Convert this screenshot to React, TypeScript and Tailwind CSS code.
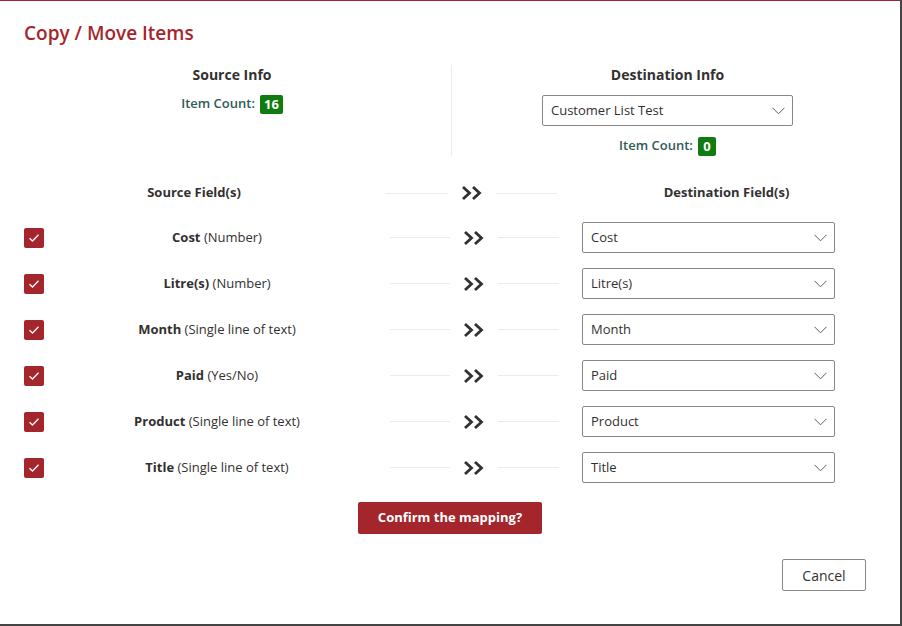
import React from 'react';

const fields = [
  { name: 'Cost', type: 'Number', dest: 'Cost' },
  { name: 'Litre(s)', type: 'Number', dest: 'Litre(s)' },
  { name: 'Month', type: 'Single line of text', dest: 'Month' },
  { name: 'Paid', type: 'Yes/No', dest: 'Paid' },
  { name: 'Product', type: 'Single line of text', dest: 'Product' },
  { name: 'Title', type: 'Single line of text', dest: 'Title' },
];

const DoubleChevron: React.FC = () => (
  <svg width="24" height="16" viewBox="0 0 24 16" fill="none">
    <path d="M3 2 L9.5 8 L3 14" stroke="#323130" strokeWidth="2.8" />
    <path d="M13 2 L19.5 8 L13 14" stroke="#323130" strokeWidth="2.8" />
  </svg>
);

const Caret: React.FC = () => (
  <svg width="13" height="8" viewBox="0 0 13 8" fill="none">
    <path d="M0.5 0.8 L6.5 6.8 L12.5 0.8" stroke="#605e5c" strokeWidth="1" />
  </svg>
);

const Dropdown: React.FC<{ value: string; width: string }> = ({ value, width }) => (
  <div className={`${width} h-[31px] border border-[#8a8886] rounded-[2px] flex items-center justify-between pl-[8px] pr-[7px] text-[13px] text-[#323130]`}>
    <span>{value}</span>
    <Caret />
  </div>
);

const Badge: React.FC<{ n: number }> = ({ n }) => (
  <span className="h-[19px] min-w-[18px] px-[4px] bg-[#107c10] rounded-[2px] text-white font-bold text-[13px] leading-[19px] text-center">{n}</span>
);

const ItemCount: React.FC<{ n: number }> = ({ n }) => (
  <div className="flex items-center justify-center gap-[5px] h-[20px]">
    <span className="text-[13px] text-[#2f5b58] font-semibold">Item Count:</span>
    <Badge n={n} />
  </div>
);

const Check: React.FC = () => (
  <div className="w-[20px] h-[20px] bg-[#a4262c] rounded-[2px] flex items-center justify-center">
    <svg width="12" height="10" viewBox="0 0 12 10" fill="none">
      <path d="M1.5 5.2 L4.5 8 L10.5 1.8" stroke="white" strokeWidth="1.3" />
    </svg>
  </div>
);

const App: React.FC = () => {
  return (
    <div className="w-[902px] h-[626px] bg-[#444444]" style={{ fontFamily: '"Open Sans", "Noto Sans", sans-serif' }}>
      <div className="w-[900px] h-[624px] bg-white border-t border-[#a4262c] flex flex-col px-6 text-[#323130]">
        <h1 className="mt-[18px] text-[19px] leading-[28px] text-[#a4262c] font-semibold">Copy / Move Items</h1>

        {/* source / destination info */}
        <div className="mt-[18px] flex h-[91px]">
          <div className="w-[416px] flex flex-col items-center">
            <div className="text-[14px] leading-[20px] font-bold">Source Info</div>
            <div className="mt-[9px]"><ItemCount n={16} /></div>
          </div>
          <div className="w-[11px]" />
          <div className="flex-1 border-l border-[#edebe9] pl-[7px] flex flex-col items-center">
            <div className="text-[14px] leading-[20px] font-bold">Destination Info</div>
            <div className="mt-[10px]"><Dropdown value="Customer List Test" width="w-[251px]" /></div>
            <div className="mt-[10px]"><ItemCount n={0} /></div>
          </div>
        </div>

        {/* header row */}
        <div className="mt-[27px] flex items-center h-[20px]">
          <div className="w-[340px] text-center text-[13px] font-bold">Source Field(s)</div>
          <div className="w-[21px]" />
          <div className="w-[63px] h-px bg-[#edebe9]" />
          <div className="mx-[12px] flex"><DoubleChevron /></div>
          <div className="w-[61px] h-px bg-[#edebe9]" />
          <div className="flex-1 pl-[20px] text-center text-[13px] font-bold">Destination Field(s)</div>
        </div>

        {/* mapping rows */}
        <div className="mt-[19px] flex flex-col gap-[15px]">
          {fields.map(f => (
            <div key={f.name} className="flex items-center h-[31px]">
              <Check />
              <div className="w-[346px] text-center text-[13px]">
                <span className="font-bold">{f.name}</span> ({f.type})
              </div>
              <div className="w-[60px] h-px bg-[#edebe9]" />
              <div className="mx-[12px] flex"><DoubleChevron /></div>
              <div className="w-[61px] h-px bg-[#edebe9]" />
              <div className="ml-[23px]"><Dropdown value={f.dest} width="w-[253px]" /></div>
            </div>
          ))}
        </div>

        <button className="mt-[19px] self-center w-[184px] h-[32px] bg-[#a4262c] rounded-[2px] text-white text-[13px] font-bold">
          Confirm the mapping?
        </button>

        <button className="mt-[25px] self-end mr-[10px] w-[84px] h-[32px] border border-[#8a8886] rounded-[2px] bg-white text-[14px] text-[#323130]">
          Cancel
        </button>
      </div>
    </div>
  );
};

export default App;
